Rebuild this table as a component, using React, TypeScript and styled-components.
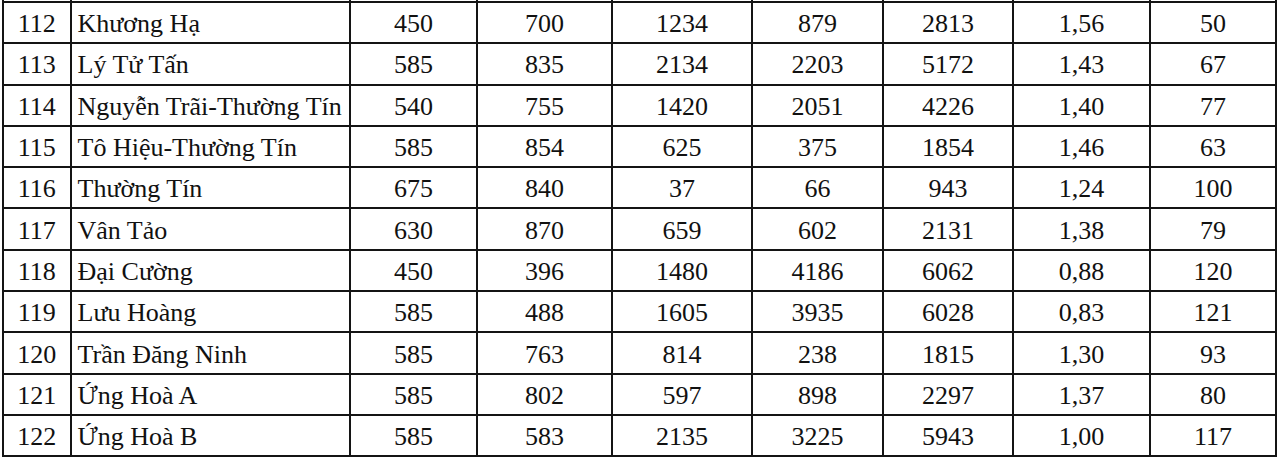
import React from 'react'
import styled, { createGlobalStyle } from 'styled-components'

const GlobalStyle = createGlobalStyle`
  html, body {
    margin: 0;
    padding: 0;
    background: #ffffff;
  }
  body {
    font-family: "Liberation Serif", "Times New Roman", serif;
    color: #111111;
  }
`

// page wrapper
const Page = styled.div`
  width: 1280px;
  height: 462px;
  overflow: hidden;
  padding: 0 0 0 2px;
  box-sizing: border-box;
  background: #ffffff;
`

// data table
const Table = styled.table`
  border-collapse: collapse;
  table-layout: fixed;
  width: 1273px;
  font-size: 26px;
`

const Row = styled.tr<{ $cut?: boolean }>`
  height: ${props => (props.$cut ? '2px' : '41.3px')};
`

const Cell = styled.td<{ $align?: 'left' | 'center'; $cut?: boolean }>`
  border: 2px solid #141414;
  border-top: ${props => (props.$cut ? 'none' : '2px solid #141414')};
  padding: ${props => (props.$cut ? '0' : props.$align === 'left' ? '3px 0 0 6px' : '3px 0 0 0')};
  text-align: ${props => props.$align ?? 'center'};
  vertical-align: middle;
  white-space: nowrap;
  overflow: hidden;
  line-height: 1;
  font-size: ${props => (props.$cut ? '0' : 'inherit')};
`

const widths = [67.5, 279.5, 127, 135, 140, 131, 130, 137, 126]

const rows: string[][] = [
  ['112', 'Khương Hạ', '450', '700', '1234', '879', '2813', '1,56', '50'],
  ['113', 'Lý Tử Tấn', '585', '835', '2134', '2203', '5172', '1,43', '67'],
  ['114', 'Nguyễn Trãi-Thường Tín', '540', '755', '1420', '2051', '4226', '1,40', '77'],
  ['115', 'Tô Hiệu-Thường Tín', '585', '854', '625', '375', '1854', '1,46', '63'],
  ['116', 'Thường Tín', '675', '840', '37', '66', '943', '1,24', '100'],
  ['117', 'Vân Tảo', '630', '870', '659', '602', '2131', '1,38', '79'],
  ['118', 'Đại Cường', '450', '396', '1480', '4186', '6062', '0,88', '120'],
  ['119', 'Lưu Hoàng', '585', '488', '1605', '3935', '6028', '0,83', '121'],
  ['120', 'Trần Đăng Ninh', '585', '763', '814', '238', '1815', '1,30', '93'],
  ['121', 'Ứng Hoà A', '585', '802', '597', '898', '2297', '1,37', '80'],
  ['122', 'Ứng Hoà B', '585', '583', '2135', '3225', '5943', '1,00', '117'],
]

const App: React.FC = () => {
  return (
    <Page>
      <GlobalStyle />
      <Table>
        <colgroup>
          {widths.map((w, i) => (
            <col key={i} style={{ width: `${w}px` }} />
          ))}
        </colgroup>
        <tbody>
          {/* tail of the previous row, cut off by the screenshot */}
          <Row $cut>
            {widths.map((_, i) => (
              <Cell key={i} $cut />
            ))}
          </Row>
          {rows.map(row => (
            <Row key={row[0]}>
              {row.map((value, i) => (
                <Cell key={i} $align={i === 1 ? 'left' : 'center'}>
                  {value}
                </Cell>
              ))}
            </Row>
          ))}
        </tbody>
      </Table>
    </Page>
  )
}

export default App
